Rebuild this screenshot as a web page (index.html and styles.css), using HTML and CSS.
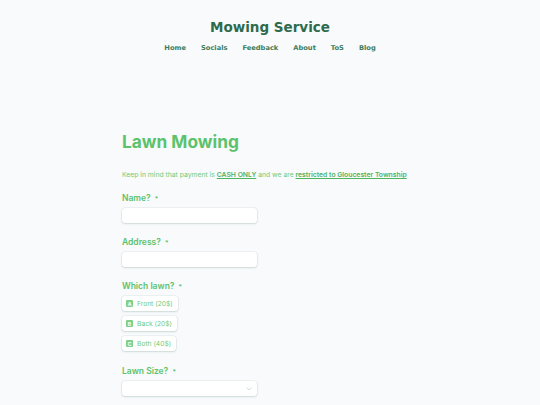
FILE: index.html
```html
<!DOCTYPE html>
<html>
<head>
<meta charset="utf-8">
<link rel="stylesheet" href="styles.css">
</head>
<body>
<header class="site-header">
  <h1 class="site-title">Mowing Service</h1>
  <nav class="nav">
    <a href="#">Home</a>
    <a href="#">Socials</a>
    <a href="#">Feedback</a>
    <a href="#">About</a>
    <a href="#">ToS</a>
    <a href="#">Blog</a>
  </nav>
</header>
<main class="form">
  <h2 class="form-title">Lawn Mowing</h2>
  <p class="note">Keep in mind that payment is <a href="#">CASH ONLY</a> and we are <a href="#">restricted to Gloucester Township</a></p>
  <div class="field">
    <label class="label">Name? <span class="req">*</span></label>
    <input class="input" type="text">
  </div>
  <div class="field">
    <label class="label">Address? <span class="req">*</span></label>
    <input class="input" type="text">
  </div>
  <div class="field">
    <label class="label">Which lawn? <span class="req">*</span></label>
    <div class="choices">
      <div class="choice"><span class="key">A</span>Front (20$)</div>
      <div class="choice"><span class="key">B</span>Back (20$)</div>
      <div class="choice"><span class="key">C</span>Both (40$)</div>
    </div>
  </div>
  <div class="field field-after-choices">
    <label class="label">Lawn Size? <span class="req">*</span></label>
    <div class="select">
      <svg class="chev" width="6" height="4" viewBox="0 0 6 4"><path d="M0.5 0.5 L3 3 L5.5 0.5" fill="none" stroke="#b9dcc0" stroke-width="0.8"/></svg>
    </div>
  </div>
</main>
</body>
</html>
```
FILE: styles.css
```css
html, body { margin: 0; padding: 0; }
body {
  background: #f8fafc;
  font-family: Inter, "Noto Sans", sans-serif;
  width: 540px;
  height: 405px;
  overflow: hidden;
}
.site-header {
  display: flex;
  flex-direction: column;
  align-items: center;
  padding-top: 18px;
}
.site-title {
  margin: 0;
  font-family: "DejaVu Sans", Verdana, sans-serif;
  font-weight: bold;
  font-size: 13.5px;
  line-height: 18px;
  color: #2e6a4c;
}
.nav {
  display: flex;
  gap: 15px;
  margin-top: 6px;
}
.nav a {
  font-family: "DejaVu Sans", Verdana, sans-serif;
  font-weight: bold;
  font-size: 6.7px;
  line-height: 12px;
  color: #3d7d5d;
  text-decoration: none;
}
.form {
  width: 296px;
  margin: 77px 0 0 122px;
  color: #5cc26b;
}
.form-title {
  margin: 0;
  font-size: 17.3px;
  line-height: 22px;
  font-weight: 700;
  color: #5cc26b;
}
.note {
  margin: 17px 0 0;
  font-size: 6.8px;
  line-height: 10px;
  color: #6fcb7c;
}
.note a {
  color: #4fb35f;
  font-weight: 600;
  text-decoration: underline;
}
.field {
  margin-top: 13px;
}
.note + .field { margin-top: 12px; }
.field-after-choices { margin-top: 14px; }
.label {
  display: block;
  font-size: 8.5px;
  line-height: 12px;
  font-weight: 600;
  color: #5cc26b;
}
.req {
  font-size: 6.5px;
  margin-left: 2px;
}
.input, .select {
  display: block;
  box-sizing: border-box;
  width: 135px;
  height: 15px;
  margin-top: 3px;
  border: none;
  border-radius: 3px;
  background: #ffffff;
  box-shadow: 0 0 0 0.5px rgba(120, 150, 140, 0.18), 0 1px 2px rgba(120, 150, 140, 0.25);
  outline: none;
}
.select {
  display: flex;
  align-items: center;
  justify-content: flex-end;
  padding-right: 5px;
}
.choices {
  display: flex;
  flex-direction: column;
  align-items: flex-start;
  gap: 5px;
  margin-top: 3px;
}
.choice {
  display: flex;
  align-items: center;
  gap: 4px;
  height: 15px;
  box-sizing: border-box;
  padding: 0 5px 0 4px;
  background: #ffffff;
  border-radius: 3px;
  box-shadow: 0 0 0 0.5px rgba(120, 150, 140, 0.18), 0 1px 2px rgba(120, 150, 140, 0.25);
  font-size: 6.7px;
  color: #6fcb7c;
}
.key {
  display: flex;
  align-items: center;
  justify-content: center;
  width: 7px;
  height: 7px;
  border-radius: 1px;
  background: #7fd08a;
  color: #ffffff;
  font-size: 5px;
  font-weight: 700;
}
```
